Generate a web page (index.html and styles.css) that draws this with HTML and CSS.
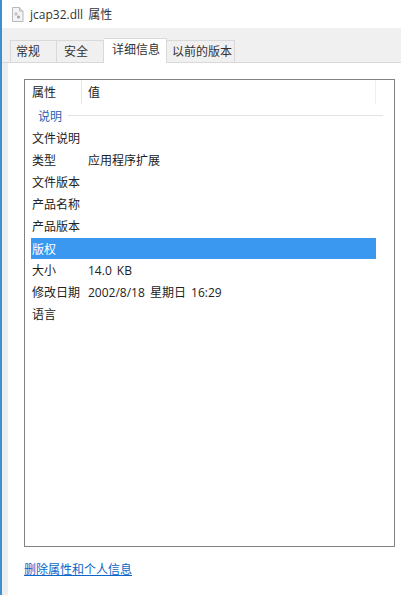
FILE: index.html
```html
<!DOCTYPE html>
<html lang="zh">
<head>
    <meta charset="UTF-8">
    <title>jcap32.dll 属性</title>
    <link rel="stylesheet" href="styles.css">
</head>
<body>

<div class="ventana">
    <div class="titulo">
        <svg class="icono" width="13" height="15" viewBox="0 0 13 15">
            <path d="M1.5 .5h7l3.5 3.5v10.5h-10.500z" fill="#f4f4f4" stroke="#b8b8b8"/>
            <path d="M8.500 .5v3.500h3.500" fill="#e4e4e4" stroke="#b8b8b8"/>
            <circle cx="5" cy="7" r="1.800" fill="#c8c8c8"/>
            <circle cx="7.500" cy="10" r="1.600" fill="#a8a8a8"/>
        </svg>
        <span>jcap32.dll 属性</span>
    </div>

    <div class="pestanas">
        <div class="pestana primera">常规</div>
        <div class="pestana segunda">安全</div>
        <div class="pestana activa">详细信息</div>
        <div class="pestana cuarta">以前的版本</div>
    </div>

    <div class="panel">
        <div class="lista">
            <div class="cabecera">
                <div class="col-nombre">属性</div>
                <div class="col-valor">值</div>
            </div>
            <div class="grupo"><span>说明</span><i></i></div>
            <div class="fila"><div class="nombre">文件说明</div><div></div></div>
            <div class="fila"><div class="nombre">类型</div><div>应用程序扩展</div></div>
            <div class="fila"><div class="nombre">文件版本</div><div></div></div>
            <div class="fila"><div class="nombre">产品名称</div><div></div></div>
            <div class="fila"><div class="nombre">产品版本</div><div></div></div>
            <div class="fila seleccionada"><div class="nombre">版权</div><div></div></div>
            <div class="fila"><div class="nombre">大小</div><div>14.0 KB</div></div>
            <div class="fila"><div class="nombre">修改日期</div><div>2002/8/18 星期日 16:29</div></div>
            <div class="fila"><div class="nombre">语言</div><div></div></div>
        </div>
        <a class="enlace" href="#">删除属性和个人信息</a>
    </div>
</div>

</body>
</html>
```

FILE: styles.css
```css
html, body {
    margin: 0;
    padding: 0;
}
body {
    width: 401px;
    height: 595px;
    overflow: hidden;
    background: #fff;
    color: #222;
    font-family: "Open Sans", "Noto Sans CJK SC", sans-serif;
    font-size: 12px;
    word-spacing: 2px;
}
.ventana {
    height: 595px;
    display: flex;
    flex-direction: column;
    border-left: 2px solid #3c8fd0;
    box-sizing: border-box;
}
.titulo {
    height: 28px;
    display: flex;
    align-items: center;
    gap: 6px;
    padding-left: 9px;
    color: #333;
}
.icono {
    flex: none;
}
.pestanas {
    height: 35px;
    background: #f0f0f0;
    display: flex;
    align-items: flex-end;
    padding-left: 8px;
    border-bottom: 1px solid #d9d9d9;
    box-sizing: border-box;
}
.pestana {
    height: 22px;
    line-height: 22px;
    background: #f0f0f0;
    border: 1px solid #d9d9d9;
    border-bottom: none;
    border-left: none;
    box-sizing: border-box;
    color: #333;
}
.primera {
    width: 47px;
    border-left: 1px solid #d9d9d9;
    padding-left: 5px;
}
.segunda {
    width: 47px;
    padding-left: 7px;
}
.cuarta {
    width: 68px;
    padding-left: 5px;
}
.pestana.activa {
    width: 63px;
    height: 25px;
    line-height: 22px;
    padding-left: 8px;
    background: #fff;
    margin-bottom: -1px;
}
.panel {
    flex: 1;
    padding: 16px 0 0 16px;
    border-left: 6px solid #eeeeee;
    box-sizing: border-box;
    display: flex;
    flex-direction: column;
}
.lista {
    width: 371px;
    height: 468px;
    border: 1px solid #828282;
    box-sizing: border-box;
    padding-left: 6px;
    flex: none;
}
.cabecera {
    display: flex;
    height: 24px;
    line-height: 26px;
    width: 344px;
    border-right: 1px solid #eee;
}
.col-nombre {
    width: 49px;
    padding-left: 1px;
    border-right: 1px solid #e6e6e6;
}
.col-valor {
    padding-left: 6px;
}
.grupo {
    height: 23px;
    display: flex;
    align-items: center;
    gap: 6px;
    padding-left: 7px;
    color: #2a5fb0;
    width: 345px;
}
.grupo i {
    flex: 1;
    border-top: 1px solid #e2e2e2;
}
.fila {
    height: 22px;
    width: 345px;
    display: flex;
    align-items: center;
    box-sizing: border-box;
    padding-left: 1px;
    white-space: nowrap;
}
.nombre {
    width: 56px;
    flex: none;
}
.seleccionada {
    background: #3a98f0;
    color: #fff;
    border-top: 1px solid #fff;
}
.enlace {
    margin-top: 13px;
    color: #0a66c8;
    text-decoration: underline;
    width: max-content;
}
```
